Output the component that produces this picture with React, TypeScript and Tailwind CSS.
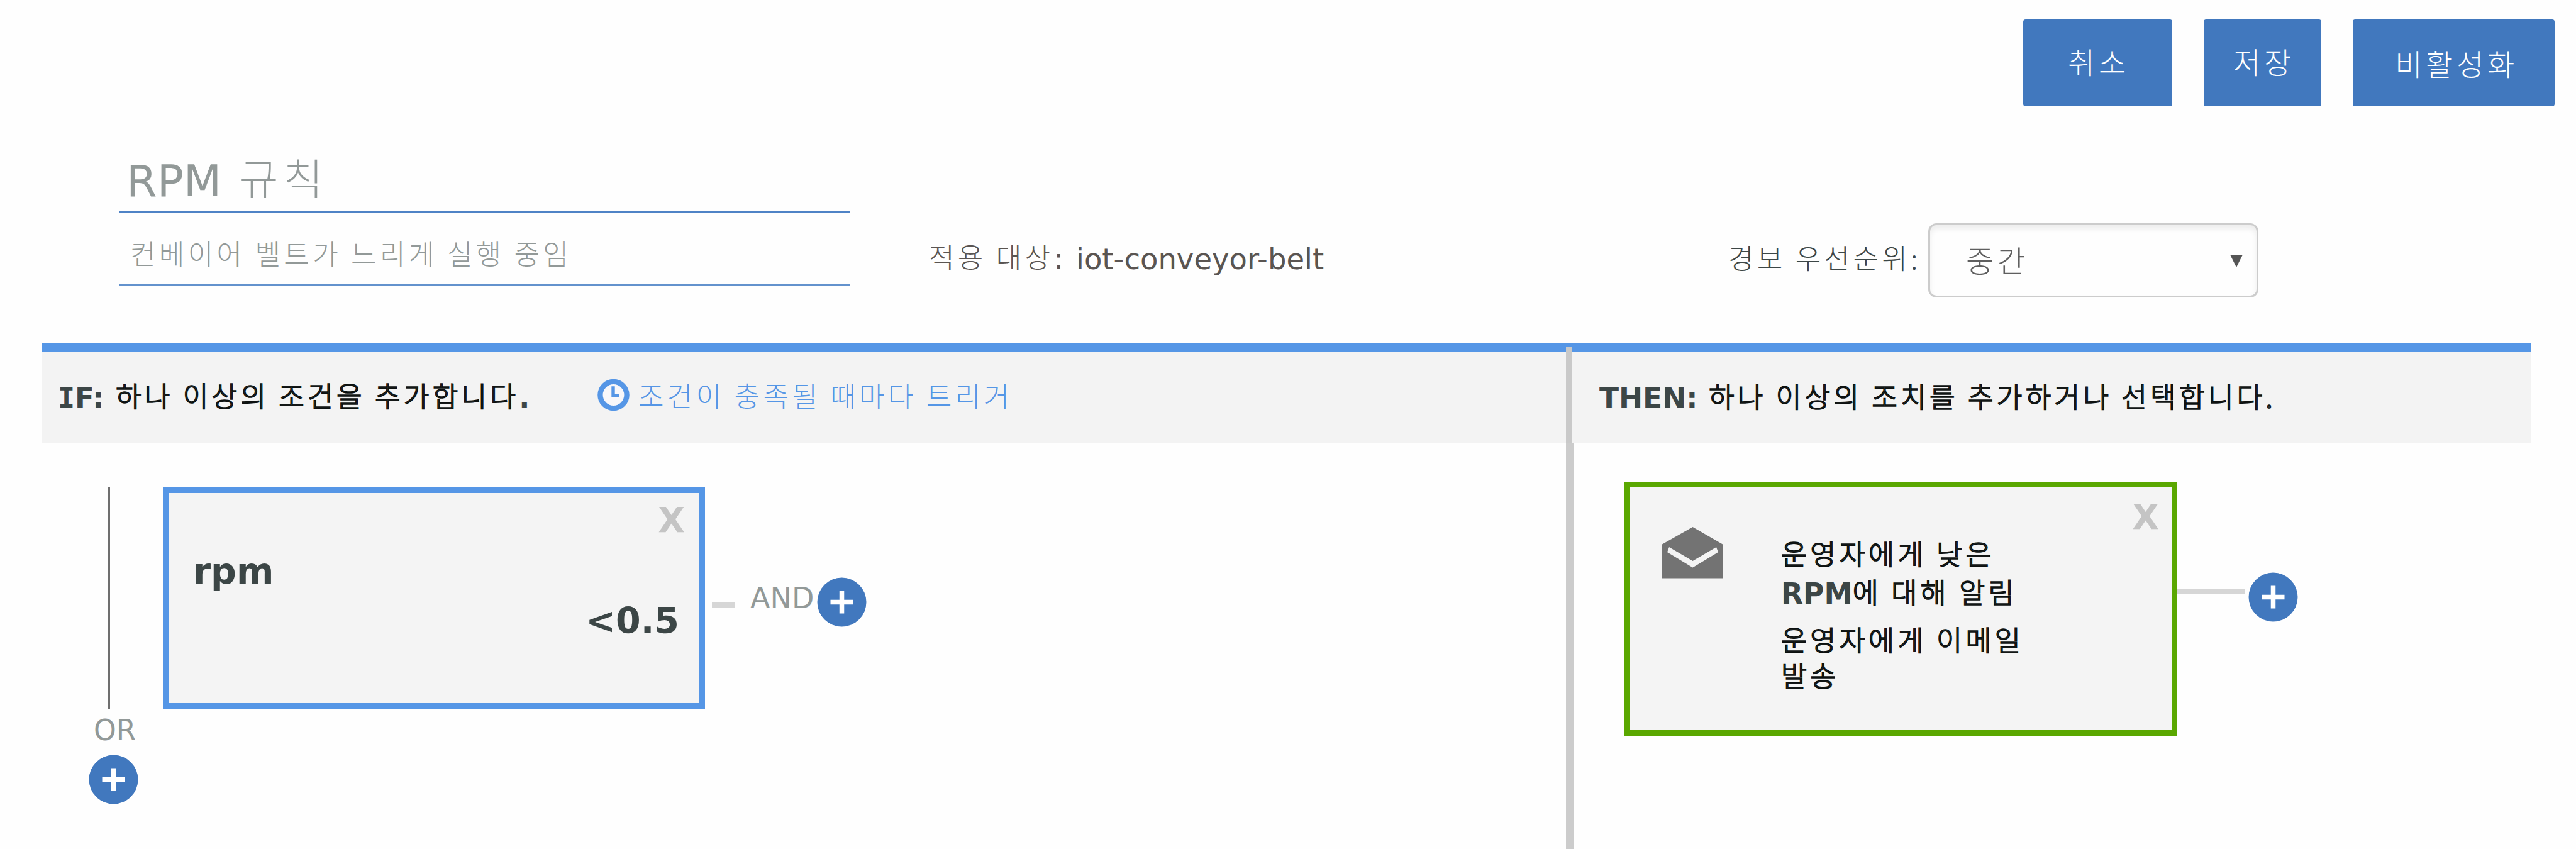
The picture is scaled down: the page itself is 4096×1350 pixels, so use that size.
import type { ReactNode } from "react";

function Ko({ children }: { children: ReactNode }) {
  return (
    <span className="align-[0.03em] font-['Noto_Sans_CJK_KR',sans-serif] text-[0.98em] leading-[0] font-light tracking-[0.12em]">
      {children}
    </span>
  );
}

function KoStrong({ children }: { children: ReactNode }) {
  return (
    <span className="align-[0.03em] font-['Noto_Sans_CJK_KR',sans-serif] text-[0.98em] leading-[0] font-light tracking-[0.12em] text-[#2c3433] [-webkit-text-stroke:1.7px_#0c100f]">
      {children}
    </span>
  );
}

function AddButton({ className }: { className: string }) {
  return (
    <button className={"h-[79px] w-[79px] shrink-0 " + className} aria-label="add">
      <svg viewBox="0 0 79 79" className="block h-full w-full">
        <circle cx="39.5" cy="39.5" r="39" fill="#4178be" />
        <path d="M39.5 21.5v36M21.5 39.5h36" stroke="#fff" strokeWidth="7.5" />
      </svg>
    </button>
  );
}

function Toolbar() {
  return (
    <div className="flex h-[169px] shrink-0 justify-end gap-[50px] pt-[31px] pr-[34px] text-[48px] leading-[140px] text-white">
      <button className="h-[138px] w-[237px] rounded-[4px] bg-[#4178be] pl-[3px]"><Ko>취소</Ko></button>
      <button className="h-[138px] w-[187px] rounded-[4px] bg-[#4178be] pl-[5px]"><Ko>저장</Ko></button>
      <button className="h-[138px] w-[321px] rounded-[4px] bg-[#4178be] pt-[3px] pl-[9px]"><Ko>비활성화</Ko></button>
    </div>
  );
}

function RuleForm() {
  return (
    <div className="flex h-[377px] shrink-0 items-start whitespace-nowrap">
      <div className="ml-[189px] w-[1163px] text-[#929998]">
        <div className="mt-[70px] h-[99px] border-b-[3px] border-[#4f83c6] pl-[12px] text-[70px] leading-[98px]">
          <span className="mr-[5px]">RPM</span> <Ko>규칙</Ko>
        </div>
        <div className="h-[116px] border-b-[3px] border-[#6392cd] pt-[25px] pl-[18px] text-[45px] leading-[88px]">
          <Ko>컨베이어 벨트가 느리게 실행 중임</Ko>
        </div>
      </div>
      <div className="mt-[213px] ml-[125px] flex w-[1271px] text-[46.5px] leading-[60px] text-[#5a5552]">
        <span className="w-[234px] text-[45px]"><Ko>적용 대상</Ko>:</span>
        <span>iot-conveyor-belt</span>
      </div>
      <div className="mt-[215px] w-[318px] text-[45px] leading-[60px] text-[#3c4646]">
        <Ko>경보 우선순위:</Ko>
      </div>
      <div className="mt-[186px] flex h-[118px] w-[525px] justify-between rounded-[13px] border-[3px] border-[#cccccc] pt-[4px] pr-[22px] pl-[57px] text-[49px] leading-[112px] text-[#5f5f5f] shadow-[inset_0_6px_8px_rgba(0,0,0,0.07)]">
        <span><Ko>중간</Ko></span>
        <svg viewBox="0 0 20 20" className="mt-[43px] h-[20px] w-[20px]">
          <path d="M0 0h20L10 20z" fill="#555" />
        </svg>
      </div>
    </div>
  );
}

function SectionHeader() {
  return (
    <div className="ml-[67px] flex h-[158px] w-[3958px] shrink-0 border-t-[13px] border-[#5596e6] bg-[#f3f3f3] text-[45px] leading-[60px] whitespace-nowrap">
      <div className="flex w-[2423px] pt-[44px] pl-[25px]">
        <div className="flex w-[858px] font-bold text-[#3c4646]">
          <span className="w-[92px]">
            <span className="font-['DejaVu_Sans_Mono'] leading-[0]">I</span>F:
          </span>
          <span><KoStrong>하나 이상의 조건을 추가합니다</KoStrong>.</span>
        </div>
        <svg viewBox="0 0 52 52" className="mt-[-1px] h-[52px] w-[51px]">
          <circle cx="26" cy="26" r="21.5" fill="#f7f7fa" stroke="#5596e6" strokeWidth="8.5" />
          <path d="M25.5 12v15h10" fill="none" stroke="#5596e6" strokeWidth="5.5" />
        </svg>
        <div className="pl-[14px] text-[#5596e6]"><Ko>조건이 충족될 때마다 트리거</Ko></div>
      </div>
      <div className="mt-[-7px] w-[10px] bg-[#c9c9c9]" />
      <div className="flex pt-[45px] pl-[43px] font-bold text-[#3c4646]">
        <span className="w-[174px] text-[45.5px]">THEN:</span>
        <span><KoStrong>하나 이상의 조치를 추가하거나 선택합니다.</KoStrong></span>
      </div>
    </div>
  );
}

function ConditionPane() {
  return (
    <div className="flex w-[2490px] items-start">
      <div className="ml-[141px] w-[79px]">
        <div className="mt-[71px] ml-[31px] h-[352px] w-[3px] bg-[#6f6f6f]" />
        <div className="mt-[5px] ml-[8px] text-[45.5px] leading-[60px] text-[#929998]">OR</div>
        <AddButton className="mt-[8px] block" />
      </div>
      <div className="mt-[71px] ml-[39px] h-[352px] w-[862px] border-[9px] border-[#5596e6] bg-[#f4f4f4] text-[57px] leading-[60px] font-bold text-[#3c4646]">
        <div className="pt-[13px] pr-[23px] text-right text-[55px] text-[#c4c4c4]">X</div>
        <div className="mt-[21px] pl-[39px]">rpm</div>
        <div className="mt-[19px] pr-[32px] text-right">&lt;0.5</div>
      </div>
      <div className="mt-[254px] ml-[11px] h-[9px] w-[37px] bg-[#d6d6d6]" />
      <div className="mt-[217px] ml-[24px] w-[102px] text-[46px] leading-[60px] text-[#929998]">AND</div>
      <AddButton className="mt-[214px] ml-[4px]" />
    </div>
  );
}

function ActionPane() {
  return (
    <div className="flex items-start">
      <div className="mt-[62px] ml-[81px] flex h-[404px] w-[879px] items-start border-[9px] border-[#5aa700] bg-[#f4f4f4] whitespace-nowrap">
        <svg viewBox="0 0 98 82" className="mt-[63px] ml-[50px] h-[82px] w-[98px]">
          <path d="M0 28L49.5 0L98 28V81.5H0z" fill="#737373" />
          <path d="M12 32L9 40L49.5 64.5L90 40L87 32L49.5 54z" fill="#f4f4f4" />
        </svg>
        <div className="mt-[78px] ml-[92px] text-[45.5px] font-bold text-[#3c4646]">
          <p className="leading-[61px]">
            <KoStrong>운영자에게 낮은</KoStrong>
            <br />
            RPM<KoStrong>에 대해 알림</KoStrong>
          </p>
          <p className="mt-[17px] leading-[57px]">
            <KoStrong>운영자에게 이메일</KoStrong>
            <br />
            <KoStrong>발송</KoStrong>
          </p>
        </div>
        <div className="mt-[17px] mr-[20px] ml-auto text-[55px] leading-[60px] font-bold text-[#c4c4c4]">X</div>
      </div>
      <div className="mt-[232px] h-[9px] w-[107px] bg-[#d6d6d6]" />
      <AddButton className="mt-[206px] ml-[6px]" />
    </div>
  );
}

export default function App() {
  return (
    <div className="flex h-[1350px] w-[4096px] flex-col overflow-hidden bg-[#fefefe] font-['DejaVu_Sans',sans-serif]">
      <Toolbar />
      <RuleForm />
      <SectionHeader />
      <div className="flex h-[646px] shrink-0">
        <ConditionPane />
        <div className="w-[12px] bg-[#cccccc]" />
        <ActionPane />
      </div>
    </div>
  );
}
